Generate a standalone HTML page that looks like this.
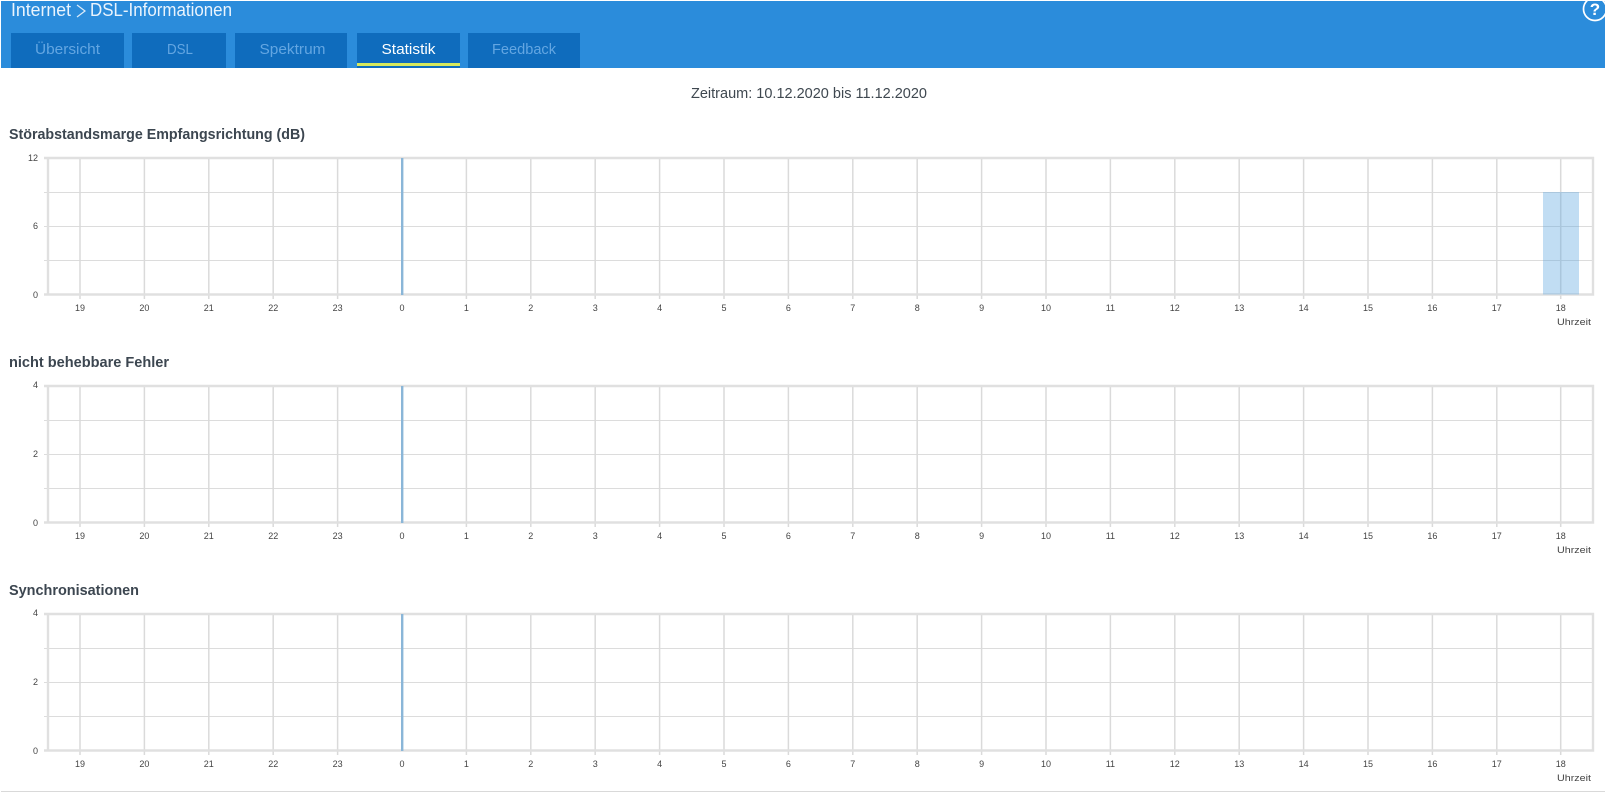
<!DOCTYPE html>
<html lang="de">
<head>
<meta charset="utf-8">
<title>DSL-Informationen</title>
<style>
html,body{margin:0;padding:0;background:#fff;width:1605px;height:801px;overflow:hidden}
svg{display:block;font-family:"Liberation Sans",sans-serif}
.tab{font-size:15px;fill:#63a6e2;text-anchor:middle}
.title{font-size:14.5px;font-weight:bold;fill:#3c4650}
.y{font-size:9px;fill:#444;text-anchor:end}
.x{font-size:9px;fill:#444;text-anchor:middle}
.u{font-size:9.5px;fill:#444}
.g{stroke:#dcdcdc;stroke-width:1;fill:none}
.v{stroke:#dadada;stroke-width:1.5;fill:none}
.b{stroke:#e0e0e0;stroke-width:2.4;fill:none}
</style>
</head>
<body>
<svg width="1605" height="801" viewBox="0 0 1605 801" xmlns="http://www.w3.org/2000/svg">
<defs>
<g id="grid">
<path class="g" d="M44 34.5H1592M44 68.5H1592M44 102.5H1592"/>
<path class="v" d="M80 0V141M144.4 0V141M208.8 0V141M273.2 0V141M337.6 0V141M466.4 0V141M530.8 0V141M595.2 0V141M659.6 0V141M724 0V141M788.4 0V141M852.8 0V141M917.2 0V141M981.6 0V141M1046 0V141M1110.4 0V141M1174.8 0V141M1239.2 0V141M1303.6 0V141M1368 0V141M1432.4 0V141M1496.8 0V141M1560.7 0V141"/>
<path class="b" d="M44 0H1593V136.5H44M48 0V136.5"/>
<rect x="401" y="0" width="2.4" height="137" fill="#8ab6d8"/>
</g>
</defs>

<rect x="1" y="1" width="1604" height="67" fill="#2b8cdb"/>
<text x="11" y="16" font-size="18" fill="#eaf4fd" textLength="60" lengthAdjust="spacingAndGlyphs">Internet</text>
<path d="M77 5L85 11L77 17" fill="none" stroke="#dcecfa" stroke-width="1.2"/>
<text x="90" y="16" font-size="18" fill="#eaf4fd" textLength="142" lengthAdjust="spacingAndGlyphs">DSL-Informationen</text>

<circle cx="1595" cy="9" r="11.5" fill="none" stroke="#fff" stroke-width="1.7"/>
<text x="1595" y="15" font-size="17" font-weight="bold" fill="#fff" text-anchor="middle">?</text>

<rect x="11" y="33" width="113" height="35" fill="#0f6cbd"/>
<rect x="132" y="33" width="94" height="35" fill="#0f6cbd"/>
<rect x="235" y="33" width="112" height="35" fill="#0f6cbd"/>
<rect x="357" y="33" width="103" height="35" fill="#0f6cbd"/>
<rect x="468" y="33" width="112" height="35" fill="#0f6cbd"/>
<rect x="357" y="63" width="103" height="3" fill="#d6e95c"/>
<text class="tab" x="67.5" y="54" textLength="65" lengthAdjust="spacingAndGlyphs">Übersicht</text>
<text class="tab" x="180" y="54" textLength="26" lengthAdjust="spacingAndGlyphs">DSL</text>
<text class="tab" x="292.5" y="54" textLength="66" lengthAdjust="spacingAndGlyphs">Spektrum</text>
<text class="tab" x="408.5" y="54" style="fill:#fff" textLength="54" lengthAdjust="spacingAndGlyphs">Statistik</text>
<text class="tab" x="524" y="54" textLength="64" lengthAdjust="spacingAndGlyphs">Feedback</text>

<text x="691" y="98" font-size="15" fill="#3f4850" textLength="236" lengthAdjust="spacingAndGlyphs">Zeitraum: 10.12.2020 bis 11.12.2020</text>

<text class="title" x="9" y="139" textLength="296" lengthAdjust="spacingAndGlyphs">Störabstandsmarge Empfangsrichtung (dB)</text>
<use href="#grid" x="0" y="158"/>
<rect x="1543" y="192" width="36" height="102.5" fill="#5ba5e0" fill-opacity=".38"/>
<text class="y" x="38" y="161">12</text><text class="y" x="38" y="229">6</text><text class="y" x="38" y="298">0</text>
<g transform="translate(0,311)">
<text class="x" x="80" y="0">19</text><text class="x" x="144.4" y="0">20</text><text class="x" x="208.8" y="0">21</text><text class="x" x="273.2" y="0">22</text><text class="x" x="337.6" y="0">23</text><text class="x" x="402" y="0">0</text><text class="x" x="466.4" y="0">1</text><text class="x" x="530.8" y="0">2</text><text class="x" x="595.2" y="0">3</text><text class="x" x="659.6" y="0">4</text><text class="x" x="724" y="0">5</text><text class="x" x="788.4" y="0">6</text><text class="x" x="852.8" y="0">7</text><text class="x" x="917.2" y="0">8</text><text class="x" x="981.6" y="0">9</text><text class="x" x="1046" y="0">10</text><text class="x" x="1110.4" y="0">11</text><text class="x" x="1174.8" y="0">12</text><text class="x" x="1239.2" y="0">13</text><text class="x" x="1303.6" y="0">14</text><text class="x" x="1368" y="0">15</text><text class="x" x="1432.4" y="0">16</text><text class="x" x="1496.8" y="0">17</text><text class="x" x="1560.7" y="0">18</text>
<text class="u" x="1557" y="14" textLength="34" lengthAdjust="spacingAndGlyphs">Uhrzeit</text>
</g>

<text class="title" x="9" y="367" textLength="160" lengthAdjust="spacingAndGlyphs">nicht behebbare Fehler</text>
<use href="#grid" x="0" y="386"/>
<text class="y" x="38" y="388">4</text><text class="y" x="38" y="457">2</text><text class="y" x="38" y="526">0</text>
<g transform="translate(0,539)">
<text class="x" x="80" y="0">19</text><text class="x" x="144.4" y="0">20</text><text class="x" x="208.8" y="0">21</text><text class="x" x="273.2" y="0">22</text><text class="x" x="337.6" y="0">23</text><text class="x" x="402" y="0">0</text><text class="x" x="466.4" y="0">1</text><text class="x" x="530.8" y="0">2</text><text class="x" x="595.2" y="0">3</text><text class="x" x="659.6" y="0">4</text><text class="x" x="724" y="0">5</text><text class="x" x="788.4" y="0">6</text><text class="x" x="852.8" y="0">7</text><text class="x" x="917.2" y="0">8</text><text class="x" x="981.6" y="0">9</text><text class="x" x="1046" y="0">10</text><text class="x" x="1110.4" y="0">11</text><text class="x" x="1174.8" y="0">12</text><text class="x" x="1239.2" y="0">13</text><text class="x" x="1303.6" y="0">14</text><text class="x" x="1368" y="0">15</text><text class="x" x="1432.4" y="0">16</text><text class="x" x="1496.8" y="0">17</text><text class="x" x="1560.7" y="0">18</text>
<text class="u" x="1557" y="14" textLength="34" lengthAdjust="spacingAndGlyphs">Uhrzeit</text>
</g>

<text class="title" x="9" y="595" textLength="130" lengthAdjust="spacingAndGlyphs">Synchronisationen</text>
<use href="#grid" x="0" y="614"/>
<text class="y" x="38" y="616">4</text><text class="y" x="38" y="685">2</text><text class="y" x="38" y="754">0</text>
<g transform="translate(0,767)">
<text class="x" x="80" y="0">19</text><text class="x" x="144.4" y="0">20</text><text class="x" x="208.8" y="0">21</text><text class="x" x="273.2" y="0">22</text><text class="x" x="337.6" y="0">23</text><text class="x" x="402" y="0">0</text><text class="x" x="466.4" y="0">1</text><text class="x" x="530.8" y="0">2</text><text class="x" x="595.2" y="0">3</text><text class="x" x="659.6" y="0">4</text><text class="x" x="724" y="0">5</text><text class="x" x="788.4" y="0">6</text><text class="x" x="852.8" y="0">7</text><text class="x" x="917.2" y="0">8</text><text class="x" x="981.6" y="0">9</text><text class="x" x="1046" y="0">10</text><text class="x" x="1110.4" y="0">11</text><text class="x" x="1174.8" y="0">12</text><text class="x" x="1239.2" y="0">13</text><text class="x" x="1303.6" y="0">14</text><text class="x" x="1368" y="0">15</text><text class="x" x="1432.4" y="0">16</text><text class="x" x="1496.8" y="0">17</text><text class="x" x="1560.7" y="0">18</text>
<text class="u" x="1557" y="14" textLength="34" lengthAdjust="spacingAndGlyphs">Uhrzeit</text>
</g>

<rect x="1" y="791" width="1604" height="1" fill="#d9d9d9"/>
</svg>
</body>
</html>
